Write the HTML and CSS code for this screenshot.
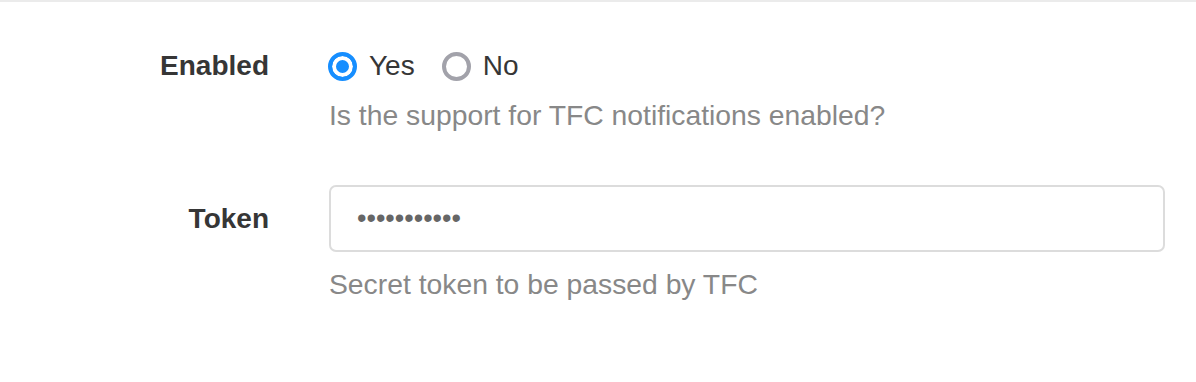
FILE: index.html
```html
<!DOCTYPE html>
<html>
<head>
<meta charset="utf-8">
<link rel="stylesheet" href="styles.css">
</head>
<body>
<div class="page">
  <div class="field field-enabled">
    <div class="label">Enabled</div>
    <div class="control">
      <div class="radios">
        <label class="radio"><input type="radio" name="enabled" checked><span>Yes</span></label>
        <label class="radio"><input type="radio" name="enabled"><span>No</span></label>
      </div>
      <p class="help">Is the support for TFC notifications enabled?</p>
    </div>
  </div>
  <div class="field field-token">
    <div class="label label-token">Token</div>
    <div class="control">
      <input class="input" type="password" value="secrettoken">
      <p class="help help-token">Secret token to be passed by TFC</p>
    </div>
  </div>
</div>
</body>
</html>
```

FILE: styles.css
```css
html, body {
  margin: 0;
  padding: 0;
  background: #ffffff;
}
body {
  font-family: "Liberation Sans", Arial, Helvetica, sans-serif;
  font-size: 28px;
  color: #363636;
}
.page {
  border-top: 2px solid #ebebeb;
  padding-top: 44px;
  padding-right: 31px;
}
.field {
  display: grid;
  grid-template-columns: 269px 1fr;
  column-gap: 60px;
  align-items: start;
}
.field-token {
  margin-top: 50px;
}
.label {
  text-align: right;
  font-weight: 700;
  line-height: 40px;
  color: #363636;
}
.label-token {
  line-height: 67px;
}
.radios {
  display: flex;
  align-items: center;
  height: 40px;
  gap: 28px;
}
.radio {
  display: flex;
  align-items: center;
  gap: 12px;
  line-height: 40px;
}
.radio input {
  appearance: none;
  -webkit-appearance: none;
  margin: 0;
  width: 29px;
  height: 29px;
  border-radius: 50%;
  border: 4px solid #a2a2aa;
  background: #fff;
  box-sizing: border-box;
  margin-left: -1px;
}
.radio input:checked {
  border-color: #168eff;
  background: #168eff;
  box-shadow: inset 0 0 0 4px #fff;
}
.help {
  margin: 9px 0 0 0;
  line-height: 40px;
  font-size: 28.3px;
  color: #888888;
}
.input {
  display: block;
  box-sizing: border-box;
  width: 100%;
  height: 67px;
  margin: 0;
  border: 2px solid #dcdcdc;
  border-radius: 7px;
  padding: 0 26px;
  font-family: "Liberation Sans", Arial, sans-serif;
  font-size: 27px;
  color: #666666;
  background: #fff;
  outline: none;
  letter-spacing: 0;
}
.help-token {
  margin-top: 12px;
}
```
